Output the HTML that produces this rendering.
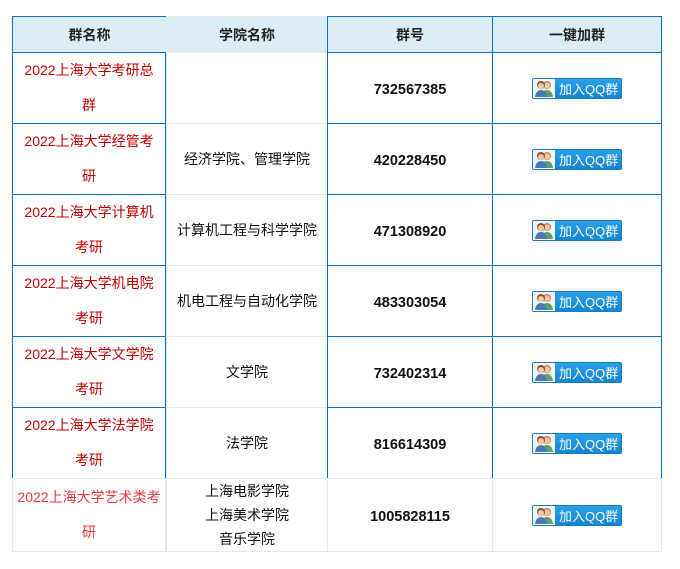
<!DOCTYPE html>
<html><head><meta charset="utf-8">
<style>
body{margin:0;background:#fff;width:680px;height:569px;overflow:hidden;font-family:"Liberation Sans","Noto Sans CJK SC",sans-serif;}
.c{position:absolute;box-sizing:border-box;display:flex;align-items:center;justify-content:center;text-align:center;font-size:14px;color:#111;}
.b{border:1px solid #0d6fbd;}
.g{border:1px solid #e8e8e8;}
.h{background:#dbeef5;font-weight:bold;color:#222;}
.r{color:#c00000;line-height:35px;padding:0 4px;}
.n{font-weight:bold;font-size:14.5px;padding-top:3px;}
.btn{width:90px;height:21px;background:linear-gradient(#2aa0e8,#1585d0);border:1px solid #1a7cc0;border-radius:2px;box-sizing:border-box;display:flex;align-items:center;color:#fff;font-size:13px;}
.ic{width:22px;height:19px;background:#f4f4f4;margin-right:4px;display:flex;align-items:center;justify-content:center;}
</style></head><body>
<div class="c h" style="left:12px;top:16px;width:154px;height:37px;border:1px solid #0d6fbd;border-right:none">群名称</div>
<div class="c h" style="left:166px;top:16px;width:162px;height:37px;border-top:1px solid #e8e8e8">学院名称</div>
<div class="c h b" style="left:327px;top:16px;width:166px;height:37px">群号</div>
<div class="c h b" style="left:492px;top:16px;width:170px;height:37px">一键加群</div>
<div id="rows"></div>
<script>
var d=[["2022上海大学考研总<br>群","","732567385"],["2022上海大学经管考<br>研","经济学院、管理学院","420228450"],["2022上海大学计算机<br>考研","计算机工程与科学学院","471308920"],["2022上海大学机电院<br>考研","机电工程与自动化学院","483303054"],["2022上海大学文学院<br>考研","文学院","732402314"],["2022上海大学法学院<br>考研","法学院","816614309"]];
var ic='<div class="ic"><svg width="20" height="18" viewBox="0 0 20 18"><circle cx="13" cy="6" r="4" fill="#c9845a"/><circle cx="13" cy="6.5" r="3" fill="#f2c9a4"/><path d="M7 18 Q8 11 13 11 Q18 11 19 18Z" fill="#5aa06a"/><circle cx="7" cy="6" r="4" fill="#8a5030"/><circle cx="7" cy="7" r="3" fill="#f2c9a4"/><path d="M1 18 Q2 11 7 11 Q12 11 13 18Z" fill="#4a78b0"/></svg></div>';
var btn='<div class="btn">'+ic+'加入QQ群</div>';
var h='';
for(var i=0;i<6;i++){var t=52+i*71;
h+='<div class="c b r" style="left:12px;top:'+t+'px;width:154px;height:72px">'+d[i][0]+'</div>';
h+='<div class="c g" style="left:166px;top:'+t+'px;width:162px;height:72px">'+d[i][1]+'</div>';
h+='<div class="c b n" style="left:327px;top:'+t+'px;width:166px;height:72px">'+d[i][2]+'</div>';
h+='<div class="c b" style="left:492px;top:'+t+'px;width:170px;height:72px">'+btn+'</div>';}
var t=478;
h+='<div class="c g r" style="left:12px;top:'+t+'px;width:154px;height:74px;color:#e8383d;font-size:14px;padding:0 2px">2022上海大学艺术类考<br>研</div>';
h+='<div class="c g" style="left:166px;top:'+t+'px;width:162px;height:74px;line-height:24px;font-size:14px">上海电影学院<br>上海美术学院<br>音乐学院</div>';
h+='<div class="c g n" style="left:327px;top:'+t+'px;width:166px;height:74px">1005828115</div>';
h+='<div class="c g" style="left:492px;top:'+t+'px;width:170px;height:74px">'+btn+'</div>';
document.getElementById('rows').innerHTML=h;
</script>
</body></html>
